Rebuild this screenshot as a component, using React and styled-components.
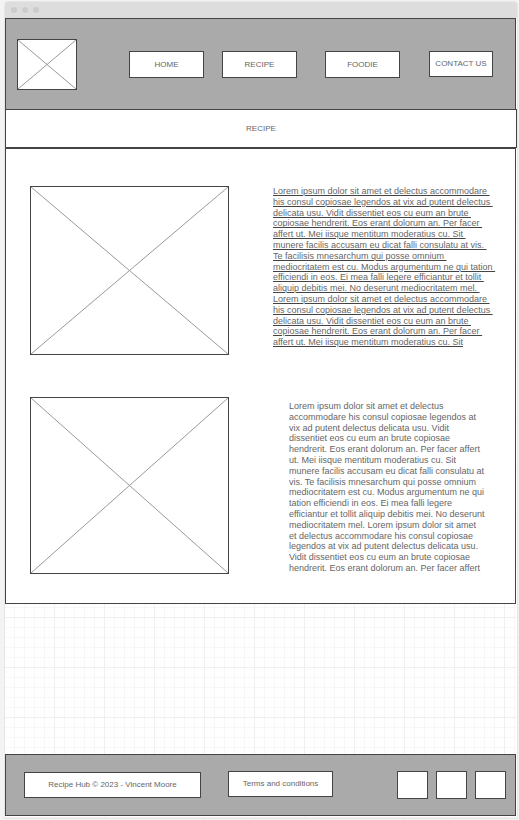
import React from 'react';
import styled, { createGlobalStyle, css } from 'styled-components';

const ink = '#444444';
const textColor = '#666666';

const GlobalStyle = createGlobalStyle`
  *, *::before, *::after { box-sizing: border-box; }
  body {
    margin: 0;
    background: #f3f3f3;
    color: ${textColor};
    font-family: "Liberation Sans", Arial, sans-serif;
    font-size: 8px;
    line-height: 10px;
  }
`;

const outlined = css`
  border: 1px solid ${ink};
  background: #ffffff;
`;

const Frame = styled.div`
  display: flex;
  flex-direction: column;
  min-height: calc(100vh - 2px);
  margin: 1px 1px 1px 4px;
  border: 1px solid #e6e6e6;
  border-radius: 4px 4px 0 0;
`;

const TitleBar = styled.div`
  display: flex;
  align-items: center;
  gap: 5px;
  height: 16px;
  padding-left: 6px;
  background: #dddddd;
  border-radius: 3px 3px 0 0;
`;

const WindowDot = styled.span`
  width: 6px;
  height: 6px;
  border-radius: 50%;
  background: #cccccc;
`;

const Canvas = styled.div`
  flex: 1;
  display: flex;
  flex-direction: column;
  padding-bottom: 2px;
  background-color: #ffffff;
  background-image:
    linear-gradient(to right, #f0f0f0 1px, transparent 1px),
    linear-gradient(to bottom, #f0f0f0 1px, transparent 1px),
    linear-gradient(to right, #f7f7f7 1px, transparent 1px),
    linear-gradient(to bottom, #f7f7f7 1px, transparent 1px);
  background-size: 50px 50px, 50px 50px, 10px 10px, 10px 10px;
  background-position: 49px 49px, 49px 49px, 9px 9px, 9px 9px;
`;

const Header = styled.header`
  display: flex;
  align-items: flex-start;
  gap: 52px;
  margin-right: 1px;
  padding: 20px 22px 19px 11px;
  border: 1px solid ${ink};
  border-bottom: 0;
  background: #aaaaaa;
`;

const Nav = styled.nav`
  flex: 1;
  display: grid;
  grid-template-columns: 93fr 103fr 104fr 64fr;
  align-items: start;
  padding-top: 12px;
`;

const BoxLink = styled.a`
  ${outlined}
  display: flex;
  align-items: center;
  justify-content: center;
  width: ${({ $width }) => $width}px;
  height: ${({ $height }) => $height}px;
  color: inherit;
  text-decoration: none;
  white-space: nowrap;
`;

const TitleStrip = styled.h1`
  ${outlined}
  margin: 0;
  padding: 14px 0 13px;
  font-size: 8px;
  font-weight: 400;
  line-height: 10px;
  text-align: center;
`;

const Main = styled.main`
  ${outlined}
  display: grid;
  gap: 42px;
  margin-right: 1px;
  padding: 37px 17px 29px 24px;
`;

const Article = styled.article`
  display: grid;
  grid-template-columns: 199fr 225fr;
  column-gap: 44px;
  align-items: start;
`;

const Picture = styled.svg`
  ${outlined}
  display: block;
  width: ${({ $width }) => $width};
  height: ${({ $height }) => $height}px;
  flex: none;

  line {
    stroke: #999999;
    stroke-width: 1;
  }
`;

const Copy = styled.p`
  margin: 0;
  padding: ${({ $inset }) => ($inset ? '4px 7px 0 16px' : '0')};
  font-size: 9px;
  line-height: 1.2;
  white-space: pre-wrap;
`;

const CopyLink = styled.a`
  color: inherit;
  text-decoration: underline;
  text-decoration-color: ${ink};
`;

const Spacer = styled.div`
  flex: 1;
  min-height: 150px;
`;

const Footer = styled.footer`
  display: flex;
  align-items: flex-start;
  margin-right: 1px;
  padding: 16px 9px 16px 18px;
  border: 1px solid ${ink};
  background: #aaaaaa;
`;

const Copyright = styled.p`
  ${outlined}
  width: 177px;
  margin: 1px 27px 0 0;
  padding: 7px 0;
  text-align: center;
`;

const Socials = styled.div`
  display: flex;
  gap: 8px;
  margin-left: auto;
`;

const navItems = [
  { label: 'HOME', width: 75, height: 27 },
  { label: 'RECIPE', width: 75, height: 27 },
  { label: 'FOODIE', width: 75, height: 27 },
  { label: 'CONTACT US', width: 64, height: 26 },
];

const firstCopy = [
  'Lorem ipsum dolor sit amet et delectus accommodare',
  'his consul copiosae legendos at vix ad putent delectus',
  'delicata usu. Vidit dissentiet eos cu eum an brute',
  'copiosae hendrerit. Eos erant dolorum an. Per facer',
  'affert ut. Mei iisque mentitum moderatius cu. Sit',
  'munere facilis accusam eu dicat falli consulatu at vis.',
  'Te facilisis mnesarchum qui posse omnium',
  'mediocritatem est cu. Modus argumentum ne qui tation',
  'efficiendi in eos. Ei mea falli legere efficiantur et tollit',
  'aliquip debitis mei. No deserunt mediocritatem mel.',
  'Lorem ipsum dolor sit amet et delectus accommodare',
  'his consul copiosae legendos at vix ad putent delectus',
  'delicata usu. Vidit dissentiet eos cu eum an brute',
  'copiosae hendrerit. Eos erant dolorum an. Per facer',
  'affert ut. Mei iisque mentitum moderatius cu. Sit',
].join(' \n');

const secondCopy = [
  'Lorem ipsum dolor sit amet et delectus',
  'accommodare his consul copiosae legendos at',
  'vix ad putent delectus delicata usu. Vidit',
  'dissentiet eos cu eum an brute copiosae',
  'hendrerit. Eos erant dolorum an. Per facer affert',
  'ut. Mei iisque mentitum moderatius cu. Sit',
  'munere facilis accusam eu dicat falli consulatu at',
  'vis. Te facilisis mnesarchum qui posse omnium',
  'mediocritatem est cu. Modus argumentum ne qui',
  'tation efficiendi in eos. Ei mea falli legere',
  'efficiantur et tollit aliquip debitis mei. No deserunt',
  'mediocritatem mel. Lorem ipsum dolor sit amet',
  'et delectus accommodare his consul copiosae',
  'legendos at vix ad putent delectus delicata usu.',
  'Vidit dissentiet eos cu eum an brute copiosae',
  'hendrerit. Eos erant dolorum an. Per facer affert',
].join(' \n');

function Placeholder({ width = '100%', height }) {
  return (
    <Picture $width={width} $height={height} aria-hidden="true">
      <line x1="0" y1="0" x2="100%" y2="100%" />
      <line x1="100%" y1="0" x2="0" y2="100%" />
    </Picture>
  );
}

export default function App() {
  return (
    <>
      <GlobalStyle />
      <Frame>
        <TitleBar>
          <WindowDot />
          <WindowDot />
          <WindowDot />
        </TitleBar>
        <Canvas>
          <Header>
            <Placeholder width="60px" height={51} />
            <Nav>
              {navItems.map((item) => (
                <BoxLink key={item.label} href="#" $width={item.width} $height={item.height}>
                  {item.label}
                </BoxLink>
              ))}
            </Nav>
          </Header>
          <TitleStrip>RECIPE</TitleStrip>
          <Main>
            <Article>
              <Placeholder height={169} />
              <Copy>
                <CopyLink href="#">{firstCopy}</CopyLink>
              </Copy>
            </Article>
            <Article>
              <Placeholder height={177} />
              <Copy $inset>{secondCopy}</Copy>
            </Article>
          </Main>
          <Spacer />
          <Footer>
            <Copyright>Recipe Hub © 2023 - Vincent Moore</Copyright>
            <BoxLink href="#" $width={105} $height={26}>
              Terms and conditions
            </BoxLink>
            <Socials>
              {['Social link 1', 'Social link 2', 'Social link 3'].map((label) => (
                <BoxLink key={label} href="#" aria-label={label} $width={31} $height={28} />
              ))}
            </Socials>
          </Footer>
        </Canvas>
      </Frame>
    </>
  );
}
